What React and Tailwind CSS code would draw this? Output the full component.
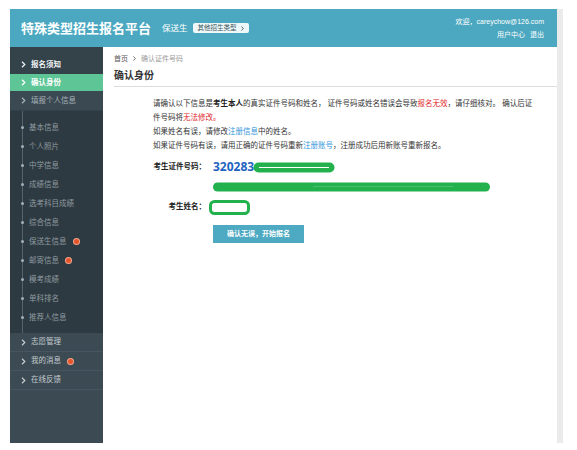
import React from "react";

const SUB_ITEMS = [
  { label: "基本信息" },
  { label: "个人照片" },
  { label: "中学信息" },
  { label: "成绩信息" },
  { label: "选考科目成绩" },
  { label: "综合信息" },
  { label: "保送生信息", dot: true },
  { label: "邮寄信息", dot: true },
  { label: "模考成绩" },
  { label: "单科排名" },
  { label: "推荐人信息" },
];

const BOTTOM_ITEMS = [
  { label: "志愿管理" },
  { label: "我的消息", dot: true },
  { label: "在线反馈" },
];

function Chevron({ className = "" }) {
  return (
    <svg width="5" height="7" viewBox="0 0 5 7" className={className}>
      <polyline points="1,0.8 3.8,3.5 1,6.2" fill="none" stroke="currentColor" strokeWidth="1.2" />
    </svg>
  );
}

function RedDot({ className = "" }) {
  return <span className={`inline-block w-[5px] h-[5px] rounded-full bg-[#e5542a] ring-1 ring-[#f2a58c] ${className}`} />;
}

function Header() {
  return (
    <header className="h-[38px] bg-[#4ba8c0] flex items-center justify-between pl-[11px] pr-[13px] text-white">
      <div className="flex items-center">
        <span className="text-[13px] font-bold leading-none">特殊类型招生报名平台</span>
        <span className="ml-[11px] text-[8.5px] leading-none">保送生</span>
        <span className="ml-[5px] h-[10px] px-[5px] flex items-center gap-[4px] rounded-[2px] bg-[#eef7f9] text-[#3d5860] text-[6.5px] leading-none">
          其他招生类型
          <svg width="3" height="5" viewBox="0 0 3 5">
            <polyline points="0.5,0.5 2.3,2.5 0.5,4.5" fill="none" stroke="currentColor" strokeWidth="0.9" />
          </svg>
        </span>
      </div>
      <div className="flex flex-col items-end text-[7px] leading-[13px] -mt-[1px]">
        <span>欢迎，careychow@126.com</span>
        <span className="flex gap-[5px]">
          <span>用户中心</span>
          <span>退出</span>
        </span>
      </div>
    </header>
  );
}

function Sidebar() {
  return (
    <aside className="w-[93px] bg-[#3c4a53] text-[7.5px] flex flex-col">
      <div className="bg-[#34424a] pt-[8px]">
        <div className="h-[19px] flex items-center pl-[11px] text-[#f1f4f5] font-bold">
          <Chevron className="mr-[5px]" />
          报名须知
        </div>
      </div>
      <div className="h-[17px] flex items-center pl-[11px] bg-[#5ec696] text-white font-bold">
        <Chevron className="mr-[5px]" />
        确认身份
      </div>
      <div className="h-[20px] flex items-center pl-[11px] bg-[#3b4952] text-[#a8b3b9] border-b border-[#33414a]">
        <Chevron className="mr-[5px]" />
        填报个人信息
      </div>
      <div className="relative bg-[#2e3a41] pt-[7px] pb-[6px]">
        <div className="absolute left-[12px] top-0 bottom-0 w-px bg-[#56636a]" />
        {SUB_ITEMS.map((item) => (
          <div key={item.label} className="relative h-[19px] flex items-center pl-[19px] text-[#8e9aa0]">
            <span className="absolute left-[11px] w-[3px] h-[3px] rounded-full bg-[#a6b0b5]" />
            {item.label}
            {item.dot && <RedDot className="ml-[7px]" />}
          </div>
        ))}
      </div>
      {BOTTOM_ITEMS.map((item) => (
        <div key={item.label} className="h-[19px] flex items-center pl-[11px] text-[#c3cbcf] border-b border-[#475560]">
          <Chevron className="mr-[5px] text-[#c3cbcf]" />
          {item.label}
          {item.dot && <RedDot className="ml-[7px]" />}
        </div>
      ))}
      <div className="flex-1" />
    </aside>
  );
}

function Content() {
  return (
    <main className="flex-1 bg-white pl-[11px] pt-[6px] text-[#333]">
      <div className="h-[10px] flex items-center text-[7px] leading-none">
        <span className="text-[#555]">首页</span>
        <Chevron className="mx-[4px] text-[#666] scale-75" />
        <span className="text-[#999]">确认证件号码</span>
      </div>
      <div className="mt-[6px] pb-[3px] border-b border-[#dddddd]">
        <h1 className="text-[10px] leading-[14px] font-bold text-[#333]">确认身份</h1>
      </div>

      <div className="ml-[39px] mt-[10px] text-[7.5px] leading-[14px] whitespace-nowrap">
        <p>
          请确认以下信息是<b className="font-bold text-[#222]">考生本人</b>的真实证件号码和姓名， 证件号码或姓名错误会导致
          <span className="text-[#e0292b]">报名无效</span>，请仔细核对。 确认后证
        </p>
        <p>
          件号码将<span className="text-[#e0292b]">无法修改。</span>
        </p>
        <p>
          如果姓名有误，请修改<span className="text-[#2f95d8]">注册信息</span>中的姓名。
        </p>
        <p>
          如果证件号码有误，请用正确的证件号码重新<span className="text-[#2f95d8]">注册账号</span>，注册成功后用新账号重新报名。
        </p>

        <div className="mt-[6px] h-[16px] flex items-center">
          <span className="w-[53px] text-right font-bold text-[#222]">考生证件号码：</span>
          <span className="ml-[7px] text-[12px] font-bold text-[#1d63c0] font-['Open_Sans',sans-serif] leading-none">320283</span>
          <svg width="82" height="11" viewBox="0 0 82 11" className="-ml-[1px]">
            <rect x="0.5" y="0.5" width="81" height="10" rx="5" fill="#22b14c" />
            <line x1="6" y1="5.5" x2="76" y2="5.5" stroke="#ffffff" strokeWidth="1" />
          </svg>
        </div>

        <div className="mt-[7px] ml-[60px] h-[10px]">
          <svg width="278" height="10" viewBox="0 0 278 10">
            <rect x="0" y="0.5" width="277" height="9" rx="4.5" fill="#22b14c" />
            <line x1="100" y1="4.5" x2="240" y2="4.5" stroke="#52c474" strokeWidth="0.8" />
          </svg>
        </div>

        <div className="mt-[7px] h-[16px] flex items-center">
          <span className="w-[53px] text-right font-bold text-[#222]">考生姓名：</span>
          <svg width="41" height="15" viewBox="0 0 41 15" className="ml-[3px]">
            <rect x="1.5" y="1.5" width="38" height="12" rx="4" fill="#ffffff" stroke="#22b14c" strokeWidth="3" />
          </svg>
        </div>

        <button className="mt-[10px] ml-[60px] w-[91px] h-[18px] bg-[#4eaac2] text-white text-[7px] font-bold flex items-center justify-center">
          确认无误，开始报名
        </button>
      </div>
    </main>
  );
}

export default function App() {
  return (
    <div className="w-[577px] h-[450px] bg-white pt-[9px] pl-[10px] font-['Liberation_Sans','Noto_Sans_CJK_SC',sans-serif] overflow-hidden">
      <div className="flex">
        <div className="w-[547px] h-[434px] flex flex-col">
          <Header />
          <div className="flex flex-1">
            <Sidebar />
            <Content />
          </div>
        </div>
        <div className="w-[6px] h-[434px] bg-[#ebebeb]" />
      </div>
    </div>
  );
}
